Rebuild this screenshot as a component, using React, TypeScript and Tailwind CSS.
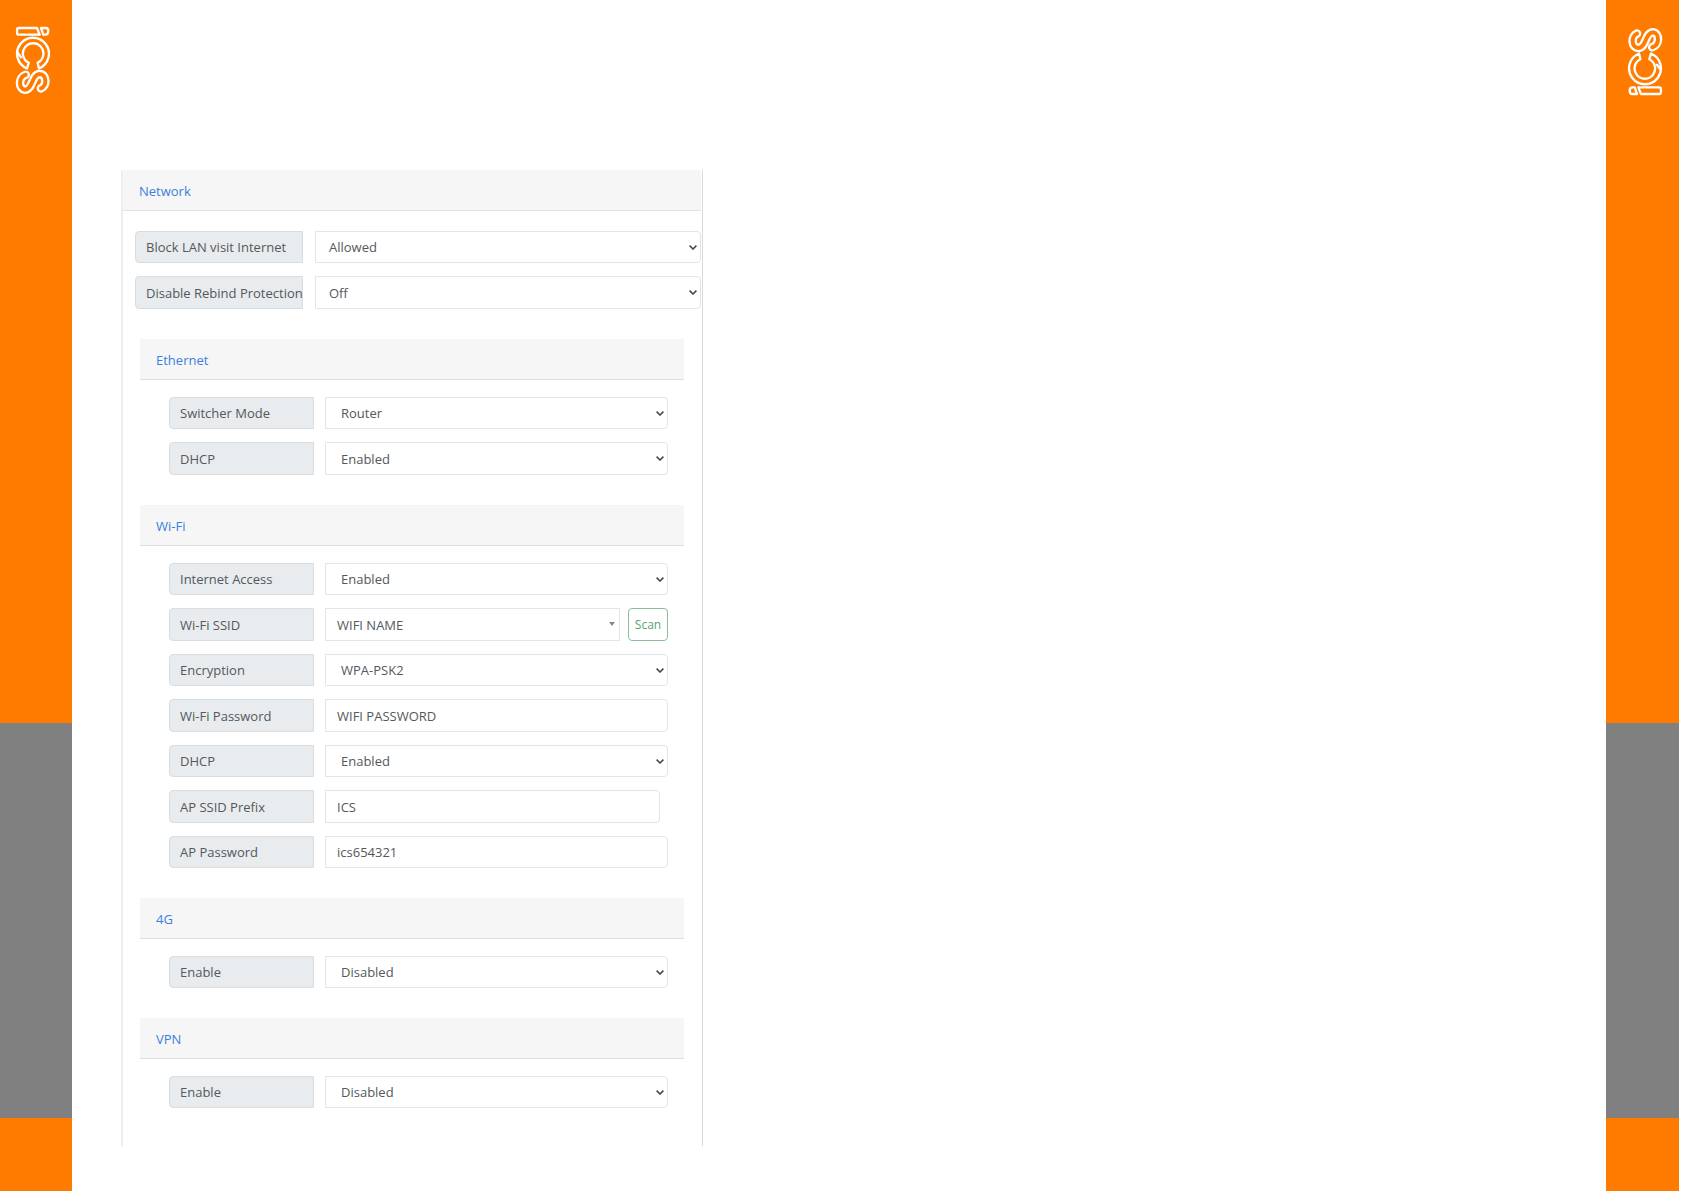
import { useId, type ReactNode } from "react";

function Logo({ flipped = false }: { flipped?: boolean }) {
  return (
    <svg
      role="img"
      aria-label="iCS"
      viewBox="46 78 108 208"
      className={
        flipped ? "mt-[27px] h-[69px] w-9 rotate-180" : "mt-[26px] h-[69px] w-9"
      }
      fill="none"
      stroke="#fff"
      strokeWidth="7"
      strokeLinejoin="round"
      strokeLinecap="round"
    >
      <path d="M57 84H112L120 104H57Q52 104 52 99V89Q52 84 57 84Z" />
      <path d="M124 84H139Q146 84 146 94Q146 104 138 104H131Z" />
      <path d="M82 206A48 48 0 1 1 118 206L114 189A31 31 0 1 0 87 189Z" />
      <path d="M53 158L64 172" />
      <path
        d="M124 266C142 260 143 223 119 223C96 224 100 269 76 270C56 268 55 232 78 225"
        strokeWidth="26"
      />
      <path
        d="M124 266C142 260 143 223 119 223C96 224 100 269 76 270C56 268 55 232 78 225"
        stroke="#ff7b00"
        strokeWidth="12"
      />
    </svg>
  );
}

function Strip({ flipped = false }: { flipped?: boolean }) {
  return (
    <aside
      className={
        flipped
          ? "mr-1.5 flex w-[73px] shrink-0 flex-col"
          : "flex w-[72px] shrink-0 flex-col"
      }
    >
      <div
        className={
          flipped
            ? "flex flex-[723] items-start justify-center bg-[#ff7b00] pl-1"
            : "flex flex-[723] items-start justify-center bg-[#ff7b00] pr-1.5"
        }
      >
        <Logo flipped={flipped} />
      </div>
      <div className="flex-[395] bg-[#808080]" />
      <div className="flex-[73] bg-[#ff7b00]" />
    </aside>
  );
}

function Row({
  id,
  label,
  wide = false,
  children,
}: {
  id: string;
  label: string;
  wide?: boolean;
  children: ReactNode;
}) {
  return (
    <div
      className={
        wide
          ? "flex h-8 gap-3 even:h-[33px]"
          : "flex h-8 gap-[11px] even:h-[33px]"
      }
    >
      <label
        htmlFor={id}
        className={
          wide
            ? "flex w-[168px] shrink-0 items-center rounded-l-sm border border-[#d9dddf] bg-[#e8ecee] pt-0.5 pl-2.5 whitespace-nowrap"
            : "flex w-[145px] shrink-0 items-center rounded-l-sm border border-[#d9dddf] bg-[#e8ecee] pt-0.5 pl-2.5 whitespace-nowrap"
        }
      >
        {label}
      </label>
      <div className="flex min-w-0 flex-1">{children}</div>
    </div>
  );
}

function SelectRow({
  label,
  value,
  wide = false,
}: {
  label: string;
  value: string;
  wide?: boolean;
}) {
  const id = useId();
  return (
    <Row id={id} label={label} wide={wide}>
      <div className="relative flex-1">
        <select
          id={id}
          className={
            wide
              ? "block h-full w-full appearance-none rounded-r-sm border border-[#e2e4e5] bg-white pt-0.5 pl-[13px]"
              : "block h-full w-full appearance-none rounded-r-sm border border-[#e2e4e5] bg-white pt-0.5 pl-[15px]"
          }
        >
          <option>{value}</option>
        </select>
        <svg
          viewBox="0 0 8 5"
          className="pointer-events-none absolute top-3.5 right-1 h-[5px] w-2"
          fill="none"
          stroke="#444"
          strokeWidth="1.5"
        >
          <path d="M0.6 0.6L4 4L7.4 0.6" />
        </svg>
      </div>
    </Row>
  );
}

function InputRow({
  label,
  value,
  short = false,
}: {
  label: string;
  value: string;
  short?: boolean;
}) {
  const id = useId();
  return (
    <Row id={id} label={label}>
      <input
        id={id}
        type="text"
        defaultValue={value}
        className={
          short
            ? "mr-2 min-w-0 flex-1 rounded-r-sm border border-[#e2e4e5] bg-white pt-0.5 pl-[11px]"
            : "min-w-0 flex-1 rounded-r-sm border border-[#e2e4e5] bg-white pt-0.5 pl-[11px]"
        }
      />
    </Row>
  );
}

function SsidRow() {
  const id = useId();
  return (
    <Row id={id} label="Wi-Fi SSID">
      <div className="relative mr-2 flex-1">
        <select
          id={id}
          className="block h-full w-full appearance-none border border-[#e2e4e5] bg-white pt-0.5 pl-[11px]"
        >
          <option>WIFI NAME</option>
        </select>
        <svg
          viewBox="0 0 6 4"
          className="pointer-events-none absolute top-3.5 right-[5px] h-1 w-1.5"
          fill="#888"
        >
          <path d="M0 0H6L3 4Z" />
        </svg>
      </div>
      <button
        type="button"
        className="w-10 rounded-sm border border-[#8fbd9d] text-xs text-[#5aa371]"
      >
        Scan
      </button>
    </Row>
  );
}

function Section({ title, children }: { title: string; children: ReactNode }) {
  return (
    <section className="mr-[17px] ml-[17px]">
      <h2 className="flex h-[41px] items-center border-b border-[#dcdee0] bg-[#f6f6f6] pt-[3px] pl-4 text-[#3a7fe0]">
        {title}
      </h2>
      <div className="flex flex-col gap-[13px] pt-[17px] pr-4 pl-[29px]">
        {children}
      </div>
    </section>
  );
}

export default function App() {
  return (
    <div className="flex min-h-screen bg-white font-['Open_Sans','Noto_Sans',sans-serif] text-[13px] text-[#54585c]">
      <Strip />
      <main className="min-w-0 flex-1 pt-[170px] pb-11 pl-[49px]">
        <div className="w-full max-w-[582px] border-r border-l-2 border-r-[#d8dadc] border-l-[#eeeeee] pr-px">
          <h1 className="flex h-[41px] items-center border-b border-[#e2e3e5] bg-[#f6f6f6] pt-[3px] pl-4 text-[#3a7fe0]">
            Network
          </h1>
          <div className="flex flex-col gap-[30px] pt-5 pb-[38px]">
            <div className="flex flex-col gap-[13px] pl-3">
              <SelectRow wide label="Block LAN visit Internet" value="Allowed" />
              <SelectRow wide label="Disable Rebind Protection" value="Off" />
            </div>
            <Section title="Ethernet">
              <SelectRow label="Switcher Mode" value="Router" />
              <SelectRow label="DHCP" value="Enabled" />
            </Section>
            <Section title="Wi-Fi">
              <SelectRow label="Internet Access" value="Enabled" />
              <SsidRow />
              <SelectRow label="Encryption" value="WPA-PSK2" />
              <InputRow label="Wi-Fi Password" value="WIFI PASSWORD" />
              <SelectRow label="DHCP" value="Enabled" />
              <InputRow short label="AP SSID Prefix" value="ICS" />
              <InputRow label="AP Password" value="ics654321" />
            </Section>
            <Section title="4G">
              <SelectRow label="Enable" value="Disabled" />
            </Section>
            <Section title="VPN">
              <SelectRow label="Enable" value="Disabled" />
            </Section>
          </div>
        </div>
      </main>
      <Strip flipped />
    </div>
  );
}
